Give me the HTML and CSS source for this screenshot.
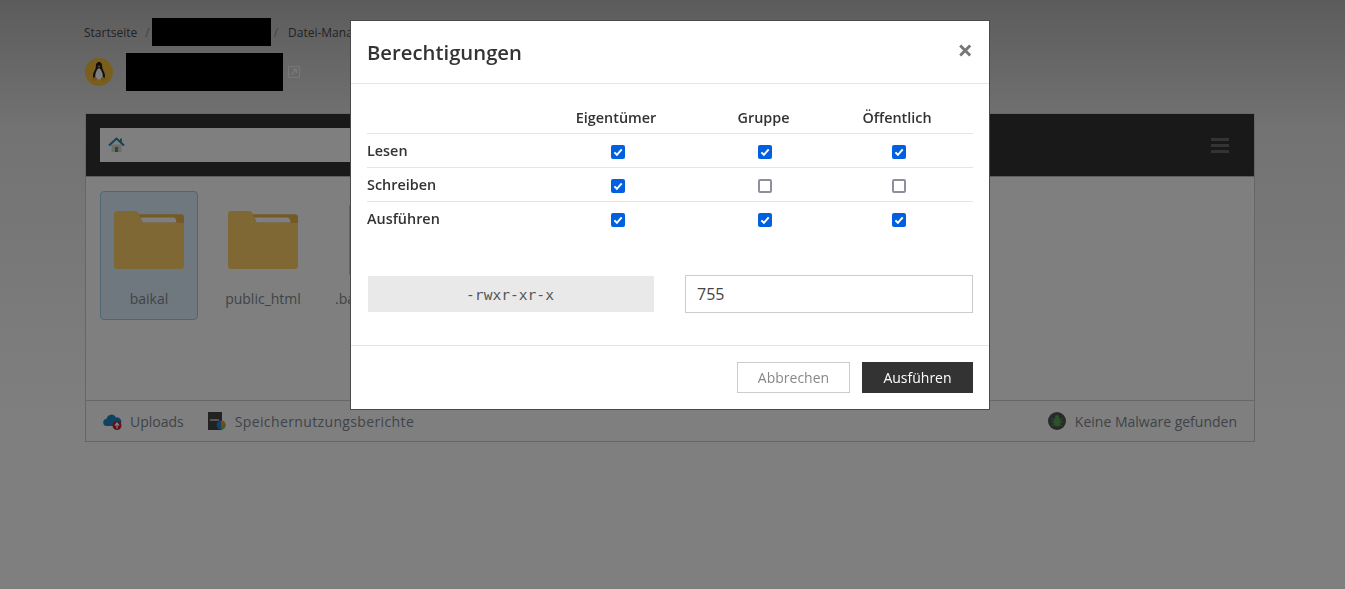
FILE: index.html
```html
<!DOCTYPE html>
<html lang="de">
<head>
    <meta charset="UTF-8">
    <title>Datei-Manager</title>
    <link rel="stylesheet" href="styles.css">
</head>
<body>
    <svg class="defs" width="0" height="0">
        <symbol id="tick" viewBox="0 0 14 14">
            <path d="M3.4 7.4l2.5 2.4 4.8-5.4" fill="none" stroke="#fff" stroke-width="2"/>
        </symbol>
        <symbol id="folder" viewBox="0 0 70 58">
            <path d="M24 3.300h43q3 0 3 3v6H28z" fill="#e8b44a"/>
            <path d="M26.500 6.500h32.500q3 0 3.500 5H28.500z" fill="#fff"/>
            <path d="M3 0h18q3 0 4 3l3 9h42v43q0 3-3 3H3q-3 0-3-3V3q0-3 3-3z" fill="#ffd168"/>
        </symbol>
    </svg>

    <div class="page">
        <div class="breadcrumb">
            <span>Startseite</span>
            <span class="sep">/</span>
            <span class="redact redact-crumb"></span>
            <span class="sep">/</span>
            <span>Datei-Manager</span>
        </div>

        <div class="title-row">
            <span class="os-badge">
                <svg width="20" height="22" viewBox="0 0 20 22">
                    <path d="M10 1c-2.500 0-3.200 2.500-3.200 5 0 2.500-2.800 5-2.800 9 0 1 .3 2 1 3h10c.7-1 1-2 1-3 0-4-2.800-6.500-2.800-9 0-2.500-.7-5-3.200-5z" fill="#1c1c1c"/>
                    <path d="M10 7c-2 1.200-3.800 4.500-3.800 8 0 2 1.700 3.500 3.800 3.500s3.800-1.500 3.800-3.500c0-3.500-1.800-6.800-3.800-8z" fill="#fff"/>
                    <path d="M8.500 4.800h3L10 6.800z" fill="#f2a62c"/>
                    <path d="M2.500 18l4-2.500 1.500 3-3 2zM17.500 18l-4-2.500-1.500 3 3 2z" fill="#f2a62c"/>
                </svg>
            </span>
            <span class="redact redact-title"></span>
            <svg class="ext-link" width="12" height="12" viewBox="0 0 12 12">
                <path d="M.5.500h11v11H.500z" fill="none" stroke="#eee"/>
                <path d="M3.500 8.500L8 4M5 3.500h3.500V7" fill="none" stroke="#eee" stroke-width="1.300"/>
            </svg>
        </div>

        <div class="panel">
            <div class="toolbar">
                <div class="address">
                    <svg width="17" height="16" viewBox="0 0 17 16">
                        <path d="M3.500 7.500h10V15h-10z" fill="#d8d8d8"/>
                        <path d="M7 10h3v5H7z" fill="#3fa34d"/>
                        <path d="M12 1.500h2v4l-2-1.500z" fill="#3fa34d"/>
                        <path d="M1 8.500l7.500-7 7.500 7" fill="none" stroke="#1f86b8" stroke-width="2"/>
                    </svg>
                </div>
                <div class="menu-icon"><i></i><i></i><i></i></div>
            </div>

            <div class="files">
                <div class="tile selected">
                    <svg class="folder" width="70" height="58"><use href="#folder"/></svg>
                    <span class="tile-name">baikal</span>
                </div>
                <div class="tile">
                    <svg class="folder" width="70" height="58"><use href="#folder"/></svg>
                    <span class="tile-name">public_html</span>
                </div>
                <div class="tile">
                    <div class="file-page"></div>
                    <span class="tile-name">.bash_profile</span>
                </div>
            </div>

            <div class="panel-footer">
                <div class="foot-item">
                    <svg width="20" height="19" viewBox="0 0 20 19">
                        <path d="M4 14a3.500 3.500 0 0 1-.5-7A5 5 0 0 1 13 5.500 4.200 4.200 0 0 1 15 14z" fill="#1f86c8"/>
                        <circle cx="14" cy="13.500" r="4.500" fill="#c8202c"/>
                        <path d="M14 16.500v-5M12 13.500l2-2.500 2 2.500" fill="none" stroke="#fff" stroke-width="1.300"/>
                    </svg>
                    <span>Uploads</span>
                </div>
                <div class="foot-item foot-wide">
                    <svg width="18" height="20" viewBox="0 0 18 20">
                        <path d="M0 1h14v18H0z" fill="#444"/>
                        <path d="M2 8h9v2H2z" fill="#aaa"/>
                        <circle cx="13" cy="14" r="4.500" fill="#2f7fd0"/>
                        <path d="M13 14l4.500 0a4.500 4.500 0 0 1-4.500 4.500z" fill="#7fbf3f"/>
                        <path d="M13 14V9.500a4.500 4.500 0 0 1 4.500 4.500z" fill="#e89a2c"/>
                    </svg>
                    <span>Speichernutzungsberichte</span>
                </div>
                <div class="foot-item foot-right">
                    <svg width="18" height="18" viewBox="0 0 18 18">
                        <circle cx="9" cy="9" r="9" fill="#505550"/>
                        <ellipse cx="9" cy="10" rx="3.500" ry="4.500" fill="#56a556"/>
                        <circle cx="9" cy="5" r="2" fill="#56a556"/>
                        <path d="M3 6l3 2M15 6l-3 2M3 10h3M15 10h-3M3.500 14.500L6 12.500M14.500 14.500L12 12.500" stroke="#56a556"/>
                    </svg>
                    <span>Keine Malware gefunden</span>
                </div>
            </div>
        </div>
    </div>

    <div class="overlay"></div>

    <div class="modal">
        <div class="modal-header">
            <h2>Berechtigungen</h2>
            <span class="close">&times;</span>
        </div>

        <div class="modal-body">
            <table class="perm-table">
                <colgroup>
                    <col class="col-label">
                    <col class="col-owner">
                    <col class="col-group">
                    <col class="col-public">
                </colgroup>
                <tr>
                    <th></th>
                    <th>Eigentümer</th>
                    <th>Gruppe</th>
                    <th>Öffentlich</th>
                </tr>
                <tr>
                    <td class="row-label">Lesen</td>
                    <td><span class="check on"><svg width="14" height="14"><use href="#tick"/></svg></span></td>
                    <td><span class="check on"><svg width="14" height="14"><use href="#tick"/></svg></span></td>
                    <td><span class="check on"><svg width="14" height="14"><use href="#tick"/></svg></span></td>
                </tr>
                <tr>
                    <td class="row-label">Schreiben</td>
                    <td><span class="check on"><svg width="14" height="14"><use href="#tick"/></svg></span></td>
                    <td><span class="check"></span></td>
                    <td><span class="check"></span></td>
                </tr>
                <tr>
                    <td class="row-label">Ausführen</td>
                    <td><span class="check on"><svg width="14" height="14"><use href="#tick"/></svg></span></td>
                    <td><span class="check on"><svg width="14" height="14"><use href="#tick"/></svg></span></td>
                    <td><span class="check on"><svg width="14" height="14"><use href="#tick"/></svg></span></td>
                </tr>
            </table>

            <div class="perm-values">
                <div class="perm-string">-rwxr-xr-x</div>
                <input class="perm-input" type="text" value="755">
            </div>
        </div>

        <div class="modal-footer">
            <button class="btn btn-cancel">Abbrechen</button>
            <button class="btn btn-run">Ausführen</button>
        </div>
    </div>
</body>
</html>
```

FILE: styles.css
```css
* {
    box-sizing: border-box;
}

html, body {
    height: 100%;
}

body {
    margin: 0;
    overflow: hidden;
    font-family: 'Open Sans', sans-serif;
    color: #333;
    background: linear-gradient(180deg, #b8b8b8 0, #e6e6e6 130px, #fff 420px);
}

.defs {
    position: absolute;
}

.page {
    padding: 18px 90px 0 85px;
}

/* breadcrumb and title */
.breadcrumb {
    display: flex;
    align-items: center;
    height: 28px;
    margin-left: -1px;
    font-size: 12px;
    color: #444;
}

.sep {
    margin: 0 2px 0 8px;
    color: #888;
}

.redact {
    display: block;
    background: #000;
}

.redact-crumb {
    width: 119px;
    height: 28px;
    margin-right: 3px;
}

.breadcrumb .redact-crumb + .sep {
    margin: 0 10px 0 0;
}

.title-row {
    display: flex;
    align-items: center;
    height: 38px;
    margin-top: 7px;
}

.os-badge {
    display: flex;
    align-items: center;
    justify-content: center;
    width: 28px;
    height: 28px;
    margin-right: 13px;
    border-radius: 50%;
    background: #f5bd3c;
}

.redact-title {
    width: 157px;
    height: 38px;
}

.ext-link {
    margin-left: 5px;
}

/* file panel */
.panel {
    margin-top: 22px;
    border: 1px solid #ccc;
    background: #fff;
}

.toolbar {
    display: flex;
    align-items: center;
    justify-content: space-between;
    height: 63px;
    padding: 0 25px 0 14px;
    background: #333;
    border-bottom: 1px solid #bbb;
}

.address {
    display: flex;
    align-items: center;
    width: 500px;
    height: 34px;
    padding-left: 8px;
    background: #fff;
}

.menu-icon i {
    display: block;
    width: 18px;
    height: 3px;
    margin: 3px 0;
    background: #666;
}

.files {
    display: flex;
    gap: 16px;
    height: 224px;
    padding: 14px 14px 0;
    border-bottom: 1px solid #ccc;
}

.tile {
    display: flex;
    flex-direction: column;
    align-items: center;
    width: 98px;
    height: 129px;
    padding-top: 19px;
    border: 1px solid transparent;
    border-radius: 4px;
}

.tile.selected {
    background: #dff0fc;
    border-color: #a5cbe6;
}

.file-page {
    width: 56px;
    height: 70px;
    margin-top: -6px;
    margin-bottom: -6px;
    background: #eee;
    border: 1px solid #ccc;
}

.tile-name {
    margin-top: 20px;
    font-size: 14px;
    line-height: 19px;
    white-space: nowrap;
    color: #808890;
}

.panel-footer {
    display: flex;
    align-items: center;
    height: 40px;
    padding: 0 17px;
    font-size: 14px;
    color: #808890;
}

.foot-item {
    display: flex;
    align-items: center;
    gap: 7px;
    margin-right: 24px;
}

.foot-wide {
    gap: 9px;
    letter-spacing: 0.37px;
}

.foot-right {
    margin: 0 0 0 auto;
    gap: 9px;
}

/* dimmer and dialog */
.overlay {
    position: fixed;
    inset: 0;
    background: rgba(0, 0, 0, 0.5);
}

.modal {
    position: fixed;
    top: 21px;
    left: 351px;
    width: 638px;
    height: 388px;
    background: #fff;
    box-shadow: 0 0 0 1px #4a4a4a;
}

.modal-header {
    display: flex;
    align-items: center;
    justify-content: space-between;
    height: 63px;
    padding: 0 16px;
    border-bottom: 1px solid #e5e5e5;
}

.modal-header h2 {
    margin: 0;
    font-size: 20.3px;
    font-weight: 600;
    color: #333;
}

.close {
    font-size: 27px;
    font-weight: 700;
    line-height: 1;
    color: #777;
    margin-top: -6px;
}

.modal-body {
    height: 262px;
    padding: 16px 16px 0;
    border-bottom: 1px solid #e5e5e5;
}

.perm-table {
    width: 606px;
    border-collapse: collapse;
    table-layout: fixed;
    font-size: 14.4px;
    font-weight: 600;
}

.col-label { width: 159px; }
.col-owner { width: 180px; }
.col-group { width: 115px; }
.col-public { width: 152px; }

.perm-table th {
    height: 33px;
    padding: 2px 0 0;
    font-weight: 600;
    text-align: center;
}

.perm-table td {
    height: 34px;
    padding: 0;
    text-align: center;
    border-top: 1px solid #e5e5e5;
}

.perm-table .row-label {
    text-align: left;
}

.check {
    display: inline-block;
    width: 14px;
    height: 14px;
    margin: 1px 0 0 3px;
    vertical-align: middle;
    border: 2px solid #8f8f9d;
    border-radius: 2px;
    background: #fff;
}

.check.on {
    border: 0;
    background: #0060df;
}

.check svg {
    display: block;
}

.perm-values {
    display: flex;
    align-items: center;
    margin-top: 40px;
}

.perm-string {
    width: 286px;
    height: 36px;
    margin-left: 1px;
    padding-right: 2px;
    font-family: 'DejaVu Sans Mono', monospace;
    font-size: 14.6px;
    line-height: 38px;
    text-align: center;
    color: #555;
    background: #e9e9e9;
}

.perm-input {
    width: 288px;
    height: 38px;
    margin-left: 31px;
    padding: 0 11px;
    font-family: 'Open Sans', sans-serif;
    font-size: 16px;
    color: #444;
    border: 1px solid #ccc;
    background: #fff;
}

.modal-footer {
    display: flex;
    justify-content: flex-end;
    gap: 12px;
    padding: 16px 16px 0;
}

.btn {
    height: 31px;
    padding: 0;
    font-family: 'Open Sans', sans-serif;
    font-size: 14px;
}

.btn-cancel {
    width: 113px;
    color: #888;
    background: #fff;
    border: 1px solid #ccc;
}

.btn-run {
    width: 111px;
    color: #fff;
    background: #333;
    border: 1px solid #333;
}
```
